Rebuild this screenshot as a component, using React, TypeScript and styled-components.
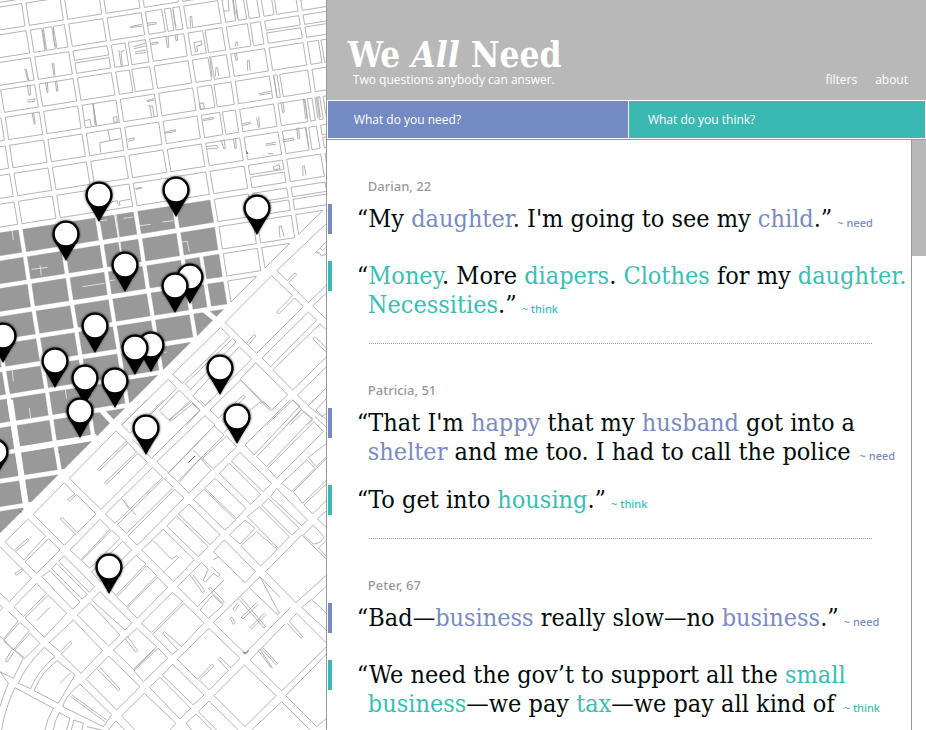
import React from "react";
import styled, { createGlobalStyle } from "styled-components";

type Kind = "need" | "think";

const serif = `"DejaVu Serif Condensed", "DejaVu Serif", serif`;
const sans = `"Open Sans", "Noto Sans", sans-serif`;
const label = `"Noto Sans", "Open Sans", sans-serif`;
const fill: Record<Kind, string> = { need: "#748ac3", think: "#3ab8b2" };
const ink: Record<Kind, string> = { need: "#788bc6", think: "#36bfb5" };

const GlobalStyle = createGlobalStyle`
  *, *::before, *::after { box-sizing: border-box; }
  body { margin: 0; background: #fff; overflow: hidden; }
`;

const Page = styled.div`
  display: grid;
  grid-template-columns: minmax(0, 6fr) minmax(0, 11fr);
  height: 100vh;
  font-family: ${sans};
`;

const MapPane = styled.section`
  height: 100vh;
  overflow: hidden;
  border-right: 1px solid #999;
`;

const MapDrawing = styled.svg`
  display: block;
  width: 100%;
  height: 100%;
`;

const Panel = styled.main`
  display: flex;
  flex-direction: column;
  height: 100vh;
  min-width: 0;
`;

const Header = styled.header`
  display: flex;
  justify-content: space-between;
  align-items: flex-end;
  height: 100px;
  padding: 0 18px 12px 21px;
  background: #b8b8b8;
  color: #fff;
`;

const Title = styled.h1`
  margin: 0;
  font: bold 35px/34px ${serif};
  white-space: nowrap;
`;

const Tagline = styled.p`
  margin: 0 0 0 5px;
  font-size: 12px;
  line-height: 16px;
`;

const Nav = styled.nav`
  display: flex;
  gap: 18px;
`;

const NavLink = styled.a`
  color: #fff;
  font-size: 12px;
  line-height: 16px;
  text-decoration: none;
`;

const Tabs = styled.div`
  display: grid;
  grid-template-columns: 300fr 296fr;
  gap: 1px;
  height: 40px;
  padding: 1px;
  border-bottom: 1px solid #999;
  background: #fff;
`;

const Tab = styled.button<{ $kind: Kind }>`
  border: 0;
  padding: 0 0 0 ${(p) => (p.$kind === "need" ? 26 : 19)}px;
  background: ${(p) => fill[p.$kind]};
  color: #fff;
  font: 12px/16px ${sans};
  text-align: left;
`;

const Body = styled.div`
  display: flex;
  flex: 1;
  min-height: 0;
`;

const Answers = styled.div`
  flex: 1;
  min-width: 0;
  overflow: hidden;
  padding: 0 0 0 1px;
`;

const Track = styled.div`
  width: 15px;
  border-left: 1px solid #999;
`;

const Thumb = styled.div`
  height: 116px;
  background: #b8b8b8;
`;

const Person = styled.article`
  padding-top: 36px;
`;

const Name = styled.h2`
  margin: 0 0 8px 40px;
  color: #999;
  font: 500 13px/20px ${label};
`;

const Quote = styled.blockquote<{ $gap: number }>`
  display: flex;
  align-items: flex-start;
  gap: 36px;
  margin: 0 0 ${(p) => p.$gap}px;
`;

const Marker = styled.span<{ $kind: Kind }>`
  flex: none;
  width: 4px;
  height: 30px;
  margin-bottom: -1px;
  background: ${(p) => fill[p.$kind]};
`;

const Words = styled.p`
  margin: 0;
  color: #000c0a;
  font: 25px/29px ${serif};
  text-indent: -11px;
  white-space: nowrap;
`;

const Key = styled.span<{ $kind: Kind }>`
  color: ${(p) => ink[p.$kind]};
`;

const Tag = styled.small<{ $kind: Kind; $far?: boolean }>`
  margin-left: ${(p) => (p.$far ? 9 : 5)}px;
  color: ${(p) => ink[p.$kind]};
  font: 500 11px/16px ${label};
`;

const Rule = styled.hr`
  margin: 0 39px 0 41px;
  border: 0;
  border-top: 1px dotted #999;
`;

/* ---------- street map: drawn in units of a third of a pixel ---------- */

type Pt = [number, number];

const MARKET = 1599;

/* Rows of blocks get slightly deeper between the third and the seventh. */
const rowTop = (b: number) => (b <= 2 ? 72 + 81 * b : b <= 7 ? 232 + 84 * (b - 2) : 652 + 81.5 * (b - 7));

const at = (a: number, b: number): Pt => [206 + 115 * a + 13.2 * b, rowTop(b) - 18 * a];

/* Part of city block (a, b): u runs east, v runs south, both from 0 to 1. */
const part = (a: number, b: number, u0: number, u1: number, v0: number, v1: number): Pt[] => {
  const [x, y] = at(a, b);
  const p = (u: number, v: number): Pt => [x + 102 * u + 10.6 * v, y - 16 * u + 67 * v];
  return [p(u0, v0), p(u1, v0), p(u1, v1), p(u0, v1)];
};

/* Keeps what lies north of the diagonal avenue. */
const cut = (poly: Pt[]): Pt[] => {
  const out: Pt[] = [];
  poly.forEach((p, i) => {
    const q = poly[(i + 1) % poly.length];
    const dp = MARKET - p[0] - p[1];
    const dq = MARKET - q[0] - q[1];
    if (dp >= 0) out.push(p);
    if (dp >= 0 !== dq >= 0) {
      const t = dp / (dp - dq);
      out.push([p[0] + (q[0] - p[0]) * t, p[1] + (q[1] - p[1]) * t]);
    }
  });
  return out;
};

const toPath = (poly: Pt[]) =>
  poly.length > 2 ? "M" + poly.map((p) => p.map(Math.round).join(",")).join("L") + "Z" : "";

const columns: Record<string, number[][]> = {
  "-1,0": [[0, 0.33], [0.38, 0.63], [0.68, 1]],
  "2,0": [[0, 0.48], [0.56, 0.74], [0.8, 1]],
  "4,-1": [[0, 0.28], [0.34, 0.62], [0.7, 1]],
  "5,-1": [[0, 0.2], [0.28, 0.55], [0.62, 1]],
  "4,0": [[0, 0.3], [0.38, 0.62], [0.7, 1]],
  "5,0": [[0, 0.3], [0.38, 1]],
  "1,1": [[0, 0.4], [0.5, 1]],
  "3,1": [[0, 0.43], [0.5, 1]],
  "4,1": [[0, 0.62], [0.7, 1]],
  "1,2": [[0, 0.4], [0.47, 1]],
  "3,2": [[0, 0.46], [0.54, 1]],
  "6,2": [[0, 0.32], [0.4, 1]],
  "0,3": [[0, 0.32], [0.33, 1]],
  "3,3": [[0, 0.43], [0.5, 1]],
  "5,3": [[0, 0.1], [0.18, 1]],
  "3,4": [[0, 0.54], [0.62, 1]],
  "5,4": [[0, 0.78], [0.86, 1]],
  "6,4": [[0, 0.1], [0.2, 1]],
  "5,5": [[0, 0.68], [0.77, 1]],
  "1,7": [[0, 1]],
  "0,7": [[0, 0.43], [0.48, 1]],
  "0,8": [[0, 0.43], [0.48, 1]],
  "2,9": [[0, 0.42], [0.54, 1]],
  "2,10": [[0, 0.42], [0.54, 1]],
};

const rows = new Set(["0,1", "5,1", "6,1", "6,5", "4,6", "4,7", "5,7", "6,0"]);

const outlined: string[] = [];
const shaded: string[] = [];
for (let b = -2; b <= 18; b++) {
  for (let a = -6; a <= 7; a++) {
    const key = `${a},${b}`;
    const target = b >= 7 && a <= 2 ? shaded : outlined;
    if (rows.has(key)) {
      target.push(toPath(cut(part(a, b, 0, 1, 0, 0.42))), toPath(cut(part(a, b, 0, 1, 0.54, 1))));
    } else {
      (columns[key] ?? [[0, 1]]).forEach(([u0, u1]) => target.push(toPath(cut(part(a, b, u0, u1, 0, 1)))));
    }
  }
}

const northAlleys = `
M671,33L687,33L685,0M700,0L706,42M710,28L712,58M391,80L425,73M391,83L427,78M440,70L468,67L469,72L442,76
M519,28L526,76L529,76M572,80L570,50L575,49L578,80M157,192L162,228M155,192L161,190L165,226M72,210L79,208L86,242M76,212L83,240
M128,88L136,150M160,85L162,122L167,140M82,254L87,286L92,285L90,254M83,300L105,296L104,304L82,306M137,247L141,278L144,277L142,246
M166,244L170,274L174,273L170,242M400,140L436,130M402,146L437,138M405,156L438,150M406,161L438,158M357,150L363,196L367,196L363,155L374,151
M452,130L474,126L474,131L454,134M498,110L502,142L507,141L504,109M526,106L528,122L533,121L531,105M582,128L604,123L606,135L590,138L593,154L587,156Z
M706,138L708,126L712,127L713,138M704,160L708,182L712,180L710,158M743,212L742,182L747,181L751,212M646,230L648,202L653,204L656,228M629,168L636,230
M778,281L812,274M779,285L812,280M821,226L831,290M439,302L462,296M441,305L463,300M443,318L449,316L455,350M449,320L458,318L462,349
M599,310L611,309L613,325L602,328ZM97,342L103,374M95,342L101,340L106,372M253,363L270,358L274,378M280,313L285,376M340,352L350,349L352,366L342,367Z
M324,390L330,422L299,428L302,458M330,422L362,416M382,418L403,414L402,420L384,424M494,397L526,389L527,394L495,400M608,358L640,352L640,357L609,362
M727,372L752,366M728,377L754,370M770,352L775,382L779,381L776,350M843,308L848,338L853,336L849,306M910,296L917,358M915,296L922,356M953,291L961,352M945,292L953,354
M619,440L650,436L655,444L621,447M664,421L671,446L676,445L672,418M700,416L705,446L709,444L706,414M796,432L828,427M797,436L828,433M739,454L744,462M804,460L820,462
M846,420L880,414L881,420L848,426M890,384L894,416L899,415L895,382M918,380L926,442M820,500L838,494L840,506L822,510ZM909,528L908,499L913,497L918,526
M406,566L426,562M408,568L426,564M335,606L352,602L355,616M358,604L392,597M358,604L360,618M840,712L837,680L844,678L852,710`;

const shadedAlleys = `
M36,690L40,720M300,662L322,660M370,655L400,651M420,677L452,673M488,666L520,662M348,640L362,745M120,796L124,826M95,808L142,802M248,860L314,850
M545,726L562,724L568,755M37,1112L40,1144M88,1224L92,1254M196,1170L200,1196M492,1058L500,1056M330,842L344,840`;

const south1 = `
M980,130L830,272L862,302L885,278L890,284L866,308L925,368L980,315M980,183L946,218L958,218L964,228L980,222M960,204L968,212L980,200
M815,287L878,347L830,396L836,402L884,354L910,380L770,520L675,428ZM980,338L938,378L980,418
M925,396L950,420L812,560L786,534ZM662,442L690,470L547,610L518,583ZM698,476L708,486L572,628L556,612Z
M718,500L755,537L612,680L578,648ZM960,432L818,570L878,630L980,530M960,432L980,450M980,505L945,470L938,476L980,518
M740,490L762,463L768,468L746,494M768,548L863,645L815,690L720,598ZM720,602L630,690L655,715L730,645L736,651L666,722L690,742L782,664
M722,600L810,692M980,560L892,645L925,677L980,622M505,598L530,625L420,735M505,598L365,735M538,630L570,662L508,722L478,692Z
M575,668L600,692L560,735M878,660L905,688L860,735M878,660L800,735M912,695L938,720L922,735M912,695L870,735M980,655L948,690L980,720`;

const south2 = `
M440,0L365,75L390,100L490,0M575,5L600,30L455,175L398,118M575,5L508,58L512,64L580,10M615,47L645,75L505,218L470,185Z
M642,78L672,105L533,245L505,220ZM580,150L612,182M680,108L710,140L640,207L608,175ZM600,175L634,210L567,280L537,248Z
M670,100L690,80M780,10L792,6L812,26M600,0L616,16L632,0
M348,93L380,123L292,208L298,212L384,128L410,156L314,248L320,252L414,160L443,188L303,328L208,235Z
M458,202L488,232L345,370L316,342ZM492,235L520,262L380,400L352,374ZM524,268L552,294L412,436L384,408ZM364,295L408,345M370,300L386,326
M193,248L225,282L203,298L208,303L230,284L288,342L232,398L186,352L181,357L226,402L193,436L100,343Z
M85,357L137,408L72,480L46,455L88,421L82,416L42,452L15,425ZM146,416L180,450L110,520L75,486Z
M300,358L330,388L242,480L210,450ZM335,390L360,415L270,505L245,482ZM368,424L395,450L300,545L275,515Z
M408,466L438,492L348,586L318,556ZM440,497L470,527L380,620L350,592ZM473,532L503,562L412,655L382,624Z
M192,467L284,560L268,577L176,484ZM170,490L262,583L246,597L155,506ZM150,512L126,530L218,628L240,606Z
M110,550L140,580L70,650L42,620ZM145,585L200,640L133,712L75,654ZM150,622L110,662M0,440L95,535L28,605L0,580M68,505L45,520L49,526L72,509
M25,635L55,662L10,718L0,710M60,667L88,692L40,750L12,720ZM90,700L120,730L75,775L44,750ZM0,615L8,622L0,632
M220,660L308,752L243,820L184,762L216,730L210,725L180,755L148,728ZM300,575L395,668L375,690L275,600ZM270,608L360,705L326,738L232,645Z
M326,768L420,860L350,930L258,838ZM290,805L355,872L360,867L298,800M410,685L470,740L400,808L340,750ZM375,715L408,757L413,752L382,708
M475,745L503,775L430,845L402,812ZM465,748L398,812M517,577L548,605L455,698L424,670ZM552,610L612,668L545,740L493,695L488,700L533,750L517,763L458,703Z
M490,388L583,480L520,545L425,450ZM460,422L515,478L530,467L536,472L490,517M530,348L625,440L595,470L500,378ZM567,312L660,404L630,434L535,342Z
M612,268L707,360L675,390L580,298ZM645,235L738,325L710,356L614,264ZM688,190L782,283L752,313L658,220ZM720,157L815,250L790,275L694,184Z
M875,0L900,18L762,165L735,135L870,0M905,30L938,55L800,200L770,170ZM942,65L970,95L830,235L803,205ZM945,50L980,82M940,0L925,18L965,50L980,40
M920,180L945,205L875,275L845,250ZM980,130L925,172L948,200L980,170M980,175L880,275L908,310L980,240M980,250L912,315L938,342L980,300
M830,265L922,360L905,377L812,290ZM805,295L898,385L875,405L785,315ZM778,320L868,410L835,445L742,350ZM735,360L765,385L720,432L688,405ZM770,395L832,448L782,498L722,438Z
M940,375L972,410Q965,430 940,432L910,405ZM980,478L905,405L797,515L888,608L980,525M980,332L952,356L980,384M980,420L956,444L980,470
M673,420L767,515L735,548L640,455ZM605,487L625,508L610,540L616,546L640,520L655,530L660,524L634,500M605,487L532,560L592,620L672,540M570,525L608,578L614,572L580,525
M640,480L655,470M625,566L668,610L672,604L632,562ZM780,530L838,640L832,644L750,565M780,530L640,668L735,760L872,622M780,530L840,592
M638,585L670,615L625,655L600,630ZM627,685L720,775L693,803L660,772L655,778L685,812L628,870L598,840L642,798L636,793L592,838L532,778Z
M733,795L828,887L735,980L642,887ZM862,670L903,715L908,710L868,664L890,640L980,730M980,740L845,873L750,780L855,672M780,748L818,805M788,742L832,790L828,794L784,746M775,752L814,804
M905,622L980,692M905,622L935,598L980,640M980,558L940,595M980,762L857,887L950,980L980,955M845,905L930,990M845,905L755,990
M715,596L792,684L797,680L722,592M770,608L724,652L729,657L775,613M795,638L750,682L755,687L800,642M690,655L700,673L706,668L696,652ZM714,608L698,628L704,633L718,614
M518,793L612,885L580,915L487,825ZM480,832L572,925L540,957L448,862ZM433,880L528,970L510,990M433,880L365,947L405,990
M627,903L715,990M627,903L595,935L650,990M588,942L558,970L575,990M588,942L635,990M348,963L325,990M348,963L375,990
M133,742Q75,800 55,850L92,866Q115,810 165,770ZM172,782L225,825L175,910L102,872Q125,815 172,782ZM210,820L180,850
M240,852L335,945L310,980L188,920Q195,890 240,852ZM215,885L320,960M212,890L316,966M45,863L160,925Q140,960 135,990M45,863Q15,925 5,990M0,815L25,850Q8,890 0,920
M178,938L210,955L200,990M178,938Q165,960 160,990M222,960L250,970L246,990M222,960L214,990M260,980L305,990M10,722L70,775L40,835L0,815M35,750L16,782L22,786L42,756`;

const dark = "M565,1388L585,1368M729,1958Q738,1964 746,1953M739,454L744,462M176,1358L180,1354M60,1532L64,1538";

const pins: Pt[] = [
  [176, 190], [99, 195], [257, 208], [66, 234], [125, 265], [190, 277], [175, 286],
  [95, 326], [3, 336], [151, 345], [135, 348], [55, 361], [220, 368], [85, 378],
  [115, 381], [80, 411], [237, 417], [146, 428], [-5, 452], [109, 567],
];

const StreetMap = () => (
  <MapDrawing viewBox="0 0 327 730" preserveAspectRatio="xMinYMin slice" role="img" aria-label="Map of answers">
    <defs>
      <filter id="glow" x="-30%" y="-30%" width="160%" height="160%">
        <feGaussianBlur stdDeviation="1.2" />
      </filter>
      <g id="pin">
        <path d="M-12,6L0,27L12,6Z" opacity=".55" filter="url(#glow)" />
        <circle r="14" opacity=".55" filter="url(#glow)" />
        <path d="M-12,6C-9,12 -4,19 0,27C4,19 9,12 12,6Z" />
        <circle r="12.4" fill="#fff" stroke="#000" strokeWidth="2.4" />
      </g>
    </defs>
    <g transform="scale(.33333)" fill="none" stroke="#a8a8a8" strokeWidth="2.6">
      <path d={outlined.join("")} />
      <path d={shaded.join("")} fill="#999" stroke="#999" strokeWidth="1" />
      <path d={northAlleys} stroke="#a4a4a4" />
      <path d={shadedAlleys} stroke="#e8e8e8" />
      <path d="M612,930L665,972M305,1232L352,1282" stroke="#fff" strokeWidth="16" />
      <path d="M50,1350L290,1311M30,1200L80,1530" stroke="#fff" strokeWidth="18" />
      <path d={south1} transform="translate(0 540)" />
      <path d={south2} transform="translate(0 1200)" />
      <path d={dark} stroke="#444" />
    </g>
    {pins.map(([x, y]) => (
      <use key={`${x}-${y}`} href="#pin" x={x} y={y} />
    ))}
  </MapDrawing>
);

/* ---------- answers: *word* marks a keyword, / a line end ---------- */

interface Answer {
  kind: Kind;
  text: string;
  open?: boolean;
}

const people: { name: string; answers: Answer[] }[] = [
  {
    name: "Darian, 22",
    answers: [
      { kind: "need", text: "“My *daughter*. I'm going to see my *child*.”" },
      { kind: "think", text: "“*Money*. More *diapers*. *Clothes* for my *daughter.*/*Necessities*.”" },
    ],
  },
  {
    name: "Patricia, 51",
    answers: [
      { kind: "need", text: "“That I'm *happy* that my *husband* got into a/*shelter* and me too. I had to call the police", open: true },
      { kind: "think", text: "“To get into *housing*.”" },
    ],
  },
  {
    name: "Peter, 67",
    answers: [
      { kind: "need", text: "“Bad—*business* really slow—no *business*.”" },
      { kind: "think", text: "“We need the gov’t to support all the *small*/*business*—we pay *tax*—we pay all kind of", open: true },
    ],
  },
];

const Line = ({ text, kind }: { text: string; kind: Kind }) => (
  <>
    {text.split("*").map((piece, i) => (i % 2 ? <Key key={i} $kind={kind}>{piece}</Key> : piece))}
  </>
);

const AnswerQuote = ({ kind, text, open, first }: Answer & { first: boolean }) => (
  <Quote $gap={first ? (open ? 19 : 28) : 24}>
    <Marker $kind={kind} />
    <Words>
      {text.split("/").map((line, i) => (
        <React.Fragment key={i}>
          {i > 0 && <br />}
          <Line text={line} kind={kind} />
        </React.Fragment>
      ))}
      <Tag $kind={kind} $far={open}>~ {kind}</Tag>
    </Words>
  </Quote>
);

export default function App() {
  return (
    <>
      <GlobalStyle />
      <Page>
        <MapPane>
          <StreetMap />
        </MapPane>
        <Panel>
          <Header>
            <div>
              <Title>We <em>All</em> Need</Title>
              <Tagline>Two questions anybody can answer.</Tagline>
            </div>
            <Nav>
              <NavLink href="#filters">filters</NavLink>
              <NavLink href="#about">about</NavLink>
            </Nav>
          </Header>
          <Tabs>
            <Tab type="button" $kind="need">What do you need?</Tab>
            <Tab type="button" $kind="think">What do you think?</Tab>
          </Tabs>
          <Body>
            <Answers>
              {people.map(({ name, answers }) => (
                <Person key={name}>
                  <Name>{name}</Name>
                  {answers.map((answer, i) => (
                    <AnswerQuote key={i} {...answer} first={i === 0} />
                  ))}
                  <Rule />
                </Person>
              ))}
            </Answers>
            <Track>
              <Thumb />
            </Track>
          </Body>
        </Panel>
      </Page>
    </>
  );
}
